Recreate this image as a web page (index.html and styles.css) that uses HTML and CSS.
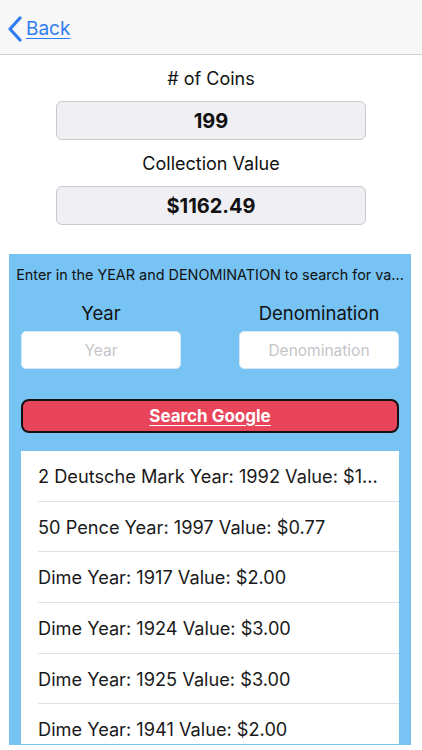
FILE: index.html
```html
<!DOCTYPE html>
<html>
<head>
<meta charset="utf-8">
<link rel="stylesheet" href="styles.css">
</head>
<body>
<header class="nav">
  <a class="back" href="#">
    <svg class="chev" width="16" height="26" viewBox="0 0 16 26"><path d="M13 2 L3 13 L13 24" fill="none" stroke="currentColor" stroke-width="3.2" stroke-linecap="round" stroke-linejoin="round"/></svg>
    <span class="back-text">Back</span>
  </a>
</header>
<main class="stats">
  <div class="stat-label">#&nbsp;of Coins</div>
  <div class="stat-box">199</div>
  <div class="stat-label">Collection Value</div>
  <div class="stat-box">$1162.49</div>
</main>
<section class="panel">
  <div class="hint">Enter in the YEAR and DENOMINATION to search for va...</div>
  <div class="fields">
    <div class="field">
      <div class="field-label">Year</div>
      <div class="input">Year</div>
    </div>
    <div class="field">
      <div class="field-label">Denomination</div>
      <div class="input">Denomination</div>
    </div>
  </div>
  <button class="search">Search Google</button>
  <ul class="list">
    <li class="row"><span class="row-text">2 Deutsche Mark Year: 1992 Value: $1...</span></li>
    <li class="row"><span class="row-text">50 Pence Year: 1997 Value: $0.77</span></li>
    <li class="row"><span class="row-text">Dime Year: 1917 Value: $2.00</span></li>
    <li class="row"><span class="row-text">Dime Year: 1924 Value: $3.00</span></li>
    <li class="row"><span class="row-text">Dime Year: 1925 Value: $3.00</span></li>
    <li class="row"><span class="row-text">Dime Year: 1941 Value: $2.00</span></li>
  </ul>
</section>
</body>
</html>
```
FILE: styles.css
```css
* { box-sizing: border-box; }
html, body {
  margin: 0;
  padding: 0;
  background: #ffffff;
  font-family: Inter, "Liberation Sans", sans-serif;
  color: #111111;
}
body { width: 422px; height: 750px; overflow: hidden; }

.nav {
  height: 55px;
  background: #f7f7f7;
  border-bottom: 1px solid #cfcfcf;
  display: flex;
  align-items: center;
  padding-left: 7px;
}
.back {
  display: flex;
  align-items: center;
  gap: 3px;
  color: #2f7cf0;
  text-decoration: none;
  margin-top: 3px;
}
.chev { display: block; }
.back-text {
  font-size: 19px;
  text-decoration: underline;
  text-underline-offset: 3px;
  text-decoration-thickness: 1px;
}

.stats {
  display: flex;
  flex-direction: column;
  align-items: center;
}
.stat-label {
  font-size: 18px;
  line-height: 24px;
  margin-top: 12px;
  color: #111;
}
.stat-box {
  width: 310px;
  height: 39px;
  margin-top: 10px;
  background: #efeff4;
  border: 1px solid #c9c9cc;
  border-radius: 6px;
  display: flex;
  align-items: center;
  justify-content: center;
  font-size: 20px;
  font-weight: 700;
  color: #111;
}

.panel {
  margin: 29px 11px 0 9px;
  background: #76c3f4;
  padding: 0 12px 1px 12px;
  display: flex;
  flex-direction: column;
}
.hint {
  margin: 11px -6px 0 -6px;
  font-size: 14.4px;
  line-height: 20px;
  text-align: center;
  white-space: nowrap;
  color: #111;
}
.fields {
  display: grid;
  grid-template-columns: 160px 160px;
  justify-content: space-between;
  margin-top: 16px;
}
.field { display: flex; flex-direction: column; align-items: center; }
.field-label {
  font-size: 18.5px;
  line-height: 24px;
  color: #111;
}
.input {
  margin-top: 6px;
  width: 100%;
  height: 38px;
  background: #ffffff;
  border: 1px solid #d6e6f2;
  border-radius: 5px;
  display: flex;
  align-items: center;
  justify-content: center;
  font-size: 15.5px;
  color: #c4c4c9;
}
.search {
  margin-top: 30px;
  height: 34px;
  width: 100%;
  background: #e8455b;
  border: 2px solid #111;
  border-radius: 8px;
  color: #ffffff;
  font-family: inherit;
  font-size: 17px;
  font-weight: 700;
  text-decoration: underline;
  text-underline-offset: 3px;
  padding: 0;
}
.list {
  list-style: none;
  margin: 18px 0 0 0;
  padding: 0;
  background: #ffffff;
  height: 293px;
  overflow: hidden;
}
.row {
  height: 50.7px;
  margin-left: 17px;
  padding-right: 18px;
  border-bottom: 1px solid #e2e2e4;
  display: flex;
  align-items: center;
}
.row-text {
  font-size: 18.2px;
  color: #1a1a1a;
  white-space: nowrap;
}
```
